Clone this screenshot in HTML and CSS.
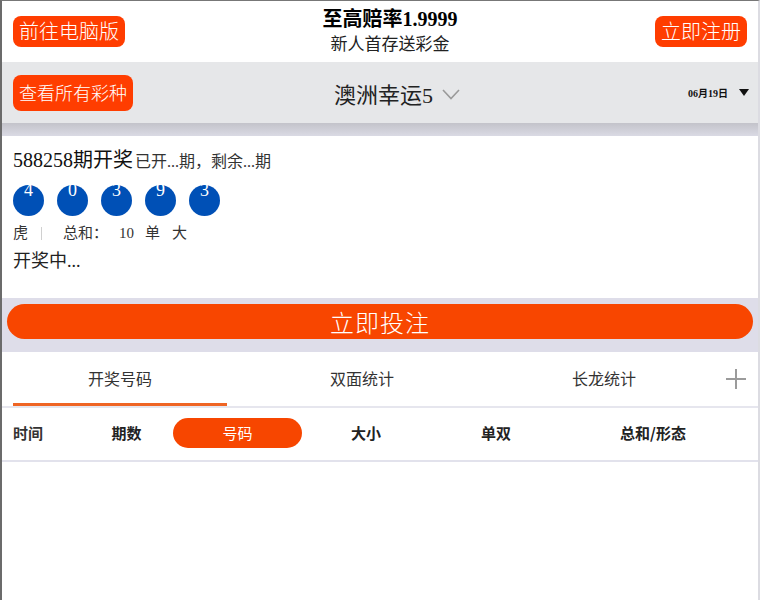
FILE: index.html
```html
<!DOCTYPE html>
<html>
<head>
    <title>澳洲幸运5</title>
    <meta charset="utf-8">
    <link rel="stylesheet" href="styles.css">
</head>
<body>
<div id="whole">
    <div class="top">
        <a class="btn" href="#">前往电脑版</a>
        <div class="slogan">
            <div class="rate">至高赔率1.9999</div>
            <div class="gift">新人首存送彩金</div>
        </div>
        <a class="btn" href="#">立即注册</a>
    </div>

    <div class="bar">
        <a class="btn btn-all" href="#">查看所有彩种</a>
        <div class="game">澳洲幸运5
            <svg class="chev" width="18" height="11" viewBox="0 0 18 11"><polyline points="1,1 9,9.5 17,1" fill="none" stroke="#9a9a9a" stroke-width="1.6"/></svg>
        </div>
        <div class="date">06月19日 <span class="tri"></span></div>
    </div>
    <div class="shadow"></div>

    <div class="card">
        <div class="issue">588258期开奖 <small>已开...期，剩余...期</small></div>
        <div class="balls">
            <span class="ball">4</span>
            <span class="ball">0</span>
            <span class="ball">3</span>
            <span class="ball">9</span>
            <span class="ball">3</span>
        </div>
        <div class="info">
            <span>虎</span><span class="sep"></span><span class="sum">总和：</span><span class="num">10</span><span class="k">单</span><span class="k">大</span>
        </div>
        <div class="status">开奖中...</div>
    </div>

    <div class="band">
        <button class="bet" type="button">立即投注</button>
    </div>

    <div class="tabs">
        <div class="tab active">开奖号码</div>
        <div class="tab">双面统计</div>
        <div class="tab">长龙统计</div>
        <svg class="plus" width="20" height="20" viewBox="0 0 20 20"><path d="M10 0V20M0 10H20" stroke="#9b9b9b" stroke-width="2"/></svg>
    </div>

    <div class="head">
        <div class="c1">时间</div>
        <div>期数</div>
        <div><span class="pill">号码</span></div>
        <div>大小</div>
        <div>单双</div>
        <div>总和/形态</div>
    </div>
</div>
</body>
</html>
```

FILE: styles.css
```css
html, body {
    margin: 0;
    padding: 0;
    background: #fff;
}

body {
    font-family: "Liberation Serif", "Noto Sans CJK SC", serif;
    color: #222;
}

a {
    text-decoration: none;
}

#whole {
    width: 756px;
    height: 599px;
    border-top: 1px solid #777;
    border-left: 2px solid #6b6b6b;
    border-right: 2px solid #dcdce2;
}

.btn {
    display: inline-block;
    background-color: #ff3d00;
    color: #fff;
    font-size: 20px;
    height: 31px;
    line-height: 30px;
    padding: 0 6px;
    border-radius: 8px;
    font-family: "Noto Sans CJK SC", sans-serif;
    font-weight: 300;
}

.top {
    height: 61px;
    display: flex;
    align-items: center;
    justify-content: space-between;
    padding: 0 11px 0 11px;
}

.slogan {
    text-align: center;
}
.rate {
    font-size: 20px;
    font-weight: bold;
    line-height: 26px;
    color: #000;
}
.gift {
    font-size: 17px;
    line-height: 26px;
    color: #222;
}

.bar {
    height: 61px;
    background-color: #e6e7e9;
    display: flex;
    align-items: center;
    padding: 0 9px 0 11px;
}
.btn-all {
    font-size: 18px;
    height: 36px;
    line-height: 35px;
}
.game {
    margin-left: 201px;
    font-size: 22px;
    color: #222;
    display: flex;
    align-items: center;
}
.chev {
    margin-left: 9px;
    margin-top: 3px;
}
.date {
    margin-left: auto;
    font-size: 10px;
    font-weight: bold;
    color: #111;
    display: flex;
    align-items: center;
}
.tri {
    display: inline-block;
    width: 0;
    height: 0;
    margin-left: 11px;
    border-top: 7px solid #111;
    border-left: 5px solid transparent;
    border-right: 5px solid transparent;
}

.shadow {
    height: 13px;
    background: linear-gradient(#c3c3ca, #dadae4);
}

.card {
    height: 162px;
    box-sizing: border-box;
    padding: 11px 11px 0;
}
.issue {
    font-size: 20px;
    line-height: 26px;
    color: #111;
}
.issue small {
    font-size: 16px;
    color: #333;
    margin-left: -3px;
}
.balls {
    display: flex;
    gap: 13px;
    margin-top: 10px;
}
.ball {
    width: 31px;
    height: 31px;
    border-radius: 50%;
    background-color: #0050b6;
    color: #fff;
    font-size: 18px;
    line-height: 10px;
    text-align: center;
}
.info {
    display: flex;
    align-items: center;
    margin-top: 7px;
    font-size: 15px;
    line-height: 20px;
    color: #333;
}
.sep {
    width: 1px;
    height: 13px;
    background-color: #d0d0d0;
    margin-left: 13px;
}
.sum {
    margin-left: 21px;
}
.num {
    margin-left: 11px;
}
.k {
    margin-left: 11px;
}
.k + .k {
    margin-left: 12px;
}
.status {
    margin-top: 5px;
    font-size: 18px;
    line-height: 26px;
    color: #222;
}

.band {
    height: 54px;
    background-color: #dedde9;
    padding: 6px 5px 0;
    box-sizing: border-box;
}
.bet {
    width: 746px;
    height: 35px;
    border: none;
    border-radius: 18px;
    background-color: #f84600;
    color: #fff;
    font-size: 24px;
    font-family: "Noto Sans CJK SC", sans-serif;
    font-weight: 300;
    padding: 0 0 3px;
    letter-spacing: 1px;
    display: block;
}

.tabs {
    height: 54px;
    display: flex;
    align-items: center;
    padding-left: 11px;
    border-bottom: 2px solid #e6e6ee;
}
.tab {
    width: 214px;
    height: 54px;
    box-sizing: border-box;
    margin-right: 28px;
    text-align: center;
    line-height: 52px;
    font-size: 16px;
    color: #333;
    font-family: "Noto Sans CJK SC", sans-serif;
}
.tab.active {
    border-bottom: 3px solid #ef6524;
}
.plus {
    margin-left: -13px;
}

.head {
    height: 54px;
    box-sizing: border-box;
    padding-bottom: 4px;
    display: grid;
    grid-template-columns: 78px 93px 129px 128px 132px 182px;
    align-items: center;
    text-align: center;
    font-family: "Noto Sans CJK SC", sans-serif;
    font-size: 15px;
    font-weight: bold;
    color: #222;
    border-bottom: 2px solid #e2e2ec;
}
.head .c1 {
    text-align: left;
    padding-left: 11px;
    color: #333;
}
.pill {
    display: block;
    height: 30px;
    line-height: 29px;
    margin-top: 2px;
    border-radius: 15px;
    background-color: #f74600;
    color: #fff;
    font-weight: normal;
}
```
